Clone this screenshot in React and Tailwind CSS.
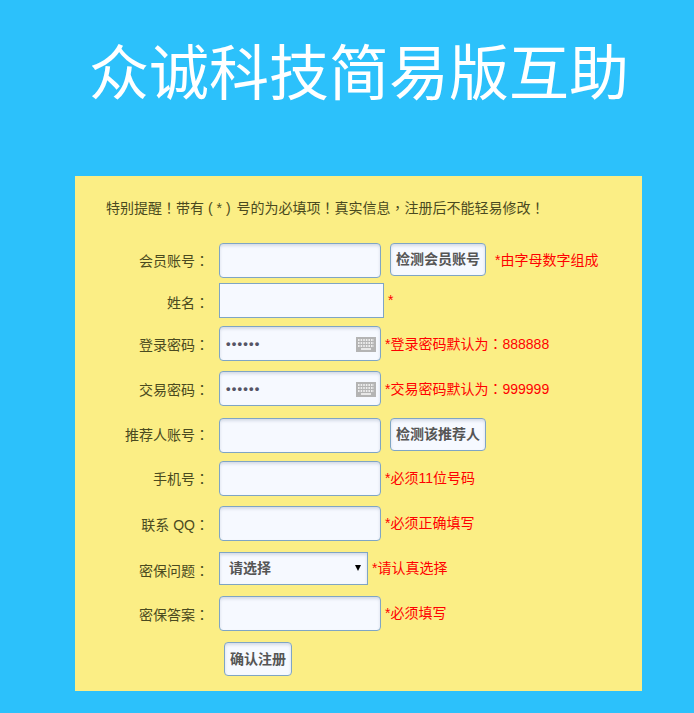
import React from "react";

const font = { fontFamily: '"Liberation Sans", "Noto Sans CJK SC", sans-serif' };

const inputCls =
  "w-[162px] h-[35px] rounded-[4px] border border-[#7fa5c4] bg-[#f6f9ff] shadow-[inset_0_2px_3px_rgba(120,130,160,0.25)]";
const btnCls =
  "rounded-[4px] border border-[#7fa5c4] bg-[#f6f9ff] text-[14px] font-bold text-[#555] shadow-[inset_0_2px_3px_rgba(120,130,160,0.25)]";

// centred full-width punctuation comes from the TC cut
const P = ({ children, className = "" }) => (
  <span className={`font-['Noto_Sans_CJK_TC'] ${className}`}>{children}</span>
);

const Keyboard = () => (
  <svg width="20" height="15" viewBox="0 0 20 15" className="absolute right-[5px] top-[11px]">
    <rect width="20" height="15" fill="#b4b4b4" />
    <path d="M2 3h16M2 6h16M2 9h16" stroke="#fff" strokeWidth="1.4" strokeDasharray="1.6 1" />
    <path d="M5 12h10" stroke="#fff" strokeWidth="1.4" />
  </svg>
);

const Row = ({ label, top, shift = "", children }) => (
  <div className={`flex items-center ${top}`}>
    <label className={`h-[20px] w-[134px] text-right text-[14px] leading-[20px] text-[#4a4a20] ${shift}`}>
      {label}<P>：</P>
    </label>
    <div className="ml-[10px] flex items-center">{children}</div>
  </div>
);

const Hint = ({ className, children }) => (
  <span className={`h-[20px] -translate-y-px text-[14px] leading-[20px] text-[#ff0000] ${className}`}>{children}</span>
);

const Password = () => (
  <div className="relative">
    <div className={`${inputCls} flex items-center pl-[6px] text-[13px] font-bold tracking-[1.2px] text-[#555566]`}>
      ••••••
    </div>
    <Keyboard />
  </div>
);

export default function App() {
  return (
    <div style={font} className="min-h-[713px] bg-[#2cc1fb] pb-[22px]">
      <h1 className="pt-[33px] pl-[89px] text-[60px] leading-[84px] font-normal text-white whitespace-nowrap">
        众诚科技简易版互助
      </h1>
      <div className="mx-[75px] mt-[59px] h-[515px] w-[567px] bg-[#fbee85] pt-[22px]">
        <p className="h-[20px] -translate-y-px pl-[31px] text-[14px] leading-[20px] text-[#4a4a20]">
          特别提醒<P>！</P>带有<span className="ml-[4px] mr-[6px]">( * )</span>号的为必填项<P>！</P>真实信息<P>，</P>注册后不能轻易修改<P>！</P>
        </p>
        <Row label="会员账号" top="mt-[25px]" shift="-translate-y-px">
          <input className={inputCls} />
          <button className={`${btnCls} ml-[9px] h-[33px] w-[96px] -translate-y-px`}>检测会员账号</button>
          <Hint className="ml-[9px]">*由字母数字组成</Hint>
        </Row>
        <Row label="姓名" top="mt-[5px]" shift="translate-y-px">
          <input className="h-[35px] w-[165px] border border-[#7fa5c4] bg-[#f6f9ff]" />
          <Hint className="ml-[4px]">*</Hint>
        </Row>
        <Row label="登录密码" top="mt-[8px]">
          <Password />
          <Hint className="ml-[4px]">*登录密码默认为<P>：</P>888888</Hint>
        </Row>
        <Row label="交易密码" top="mt-[10px]">
          <Password />
          <Hint className="ml-[4px]">*交易密码默认为<P>：</P>999999</Hint>
        </Row>
        <Row label="推荐人账号" top="mt-[12px]" shift="-translate-y-[2px]">
          <input className={inputCls} />
          <button className={`${btnCls} ml-[9px] h-[33px] w-[96px] -translate-y-px`}>检测该推荐人</button>
        </Row>
        <Row label="手机号" top="mt-[8px]" shift="-translate-y-px">
          <input className={inputCls} />
          <Hint className="ml-[4px]">*必须11位号码</Hint>
        </Row>
        <Row label="联系 QQ" top="mt-[10px]">
          <input className={inputCls} />
          <Hint className="ml-[4px]">*必须正确填写</Hint>
        </Row>
        <Row label="密保问题" top="mt-[11px]" shift="translate-y-px">
          <div className="relative flex h-[33px] w-[149px] items-center border border-[#7fa5c4] bg-[#f6f9ff] pl-[9px] text-[14px] font-bold text-[#555] shadow-[inset_0_2px_3px_rgba(120,130,160,0.25)]">
            请选择
            <span className="absolute right-[6px] top-[12px] h-0 w-0 border-x-[3px] border-t-[6px] border-x-transparent border-t-black" />
          </div>
          <Hint className="ml-[4px]">*请认真选择</Hint>
        </Row>
        <Row label="密保答案" top="mt-[11px]">
          <input className={inputCls} />
          <Hint className="ml-[4px]">*必须填写</Hint>
        </Row>
        <button className={`${btnCls} ml-[149px] mt-[11px] h-[34px] w-[68px]`}>确认注册</button>
      </div>
    </div>
  );
}
